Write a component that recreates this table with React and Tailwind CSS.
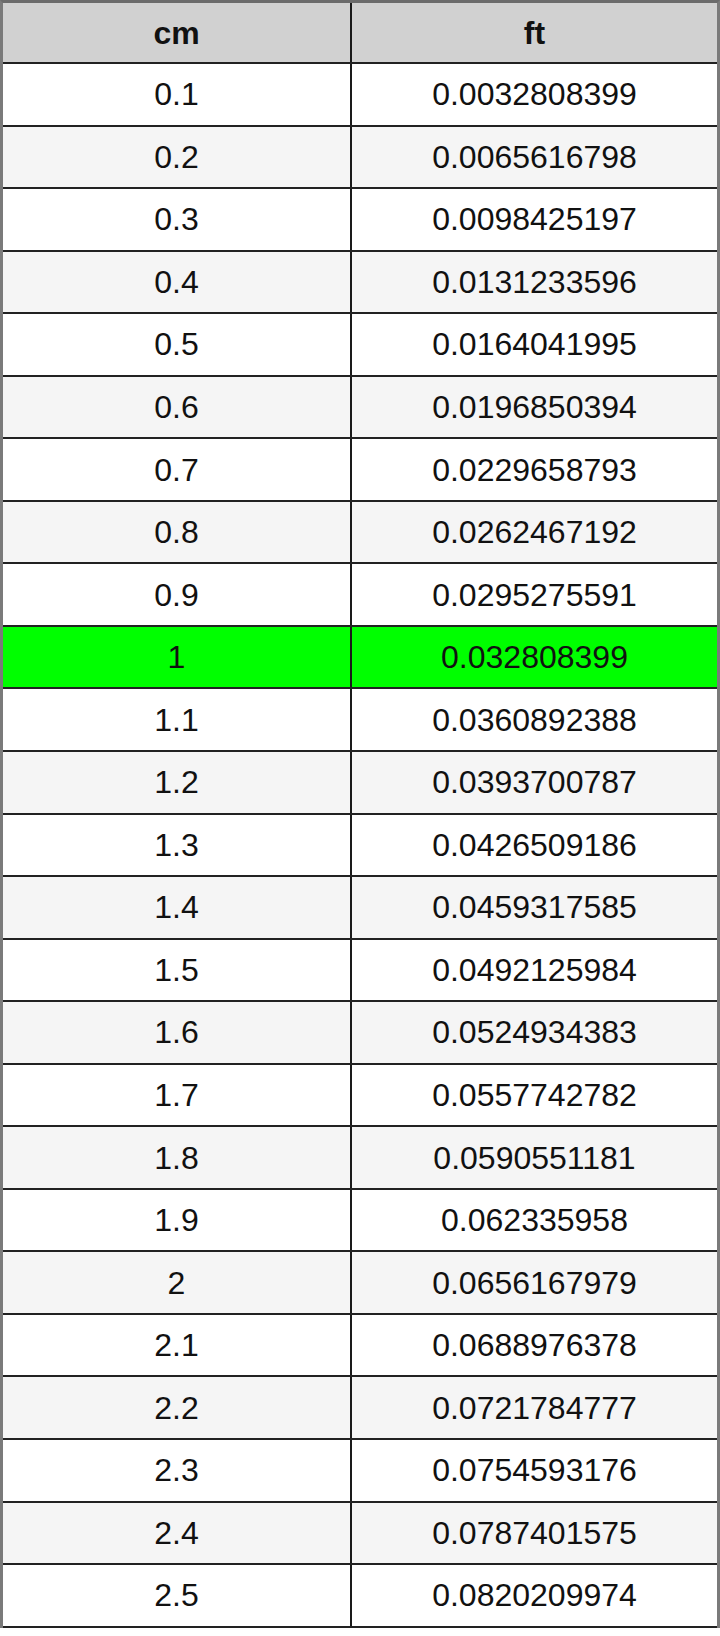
const rows = [
  ["0.1", "0.0032808399"],
  ["0.2", "0.0065616798"],
  ["0.3", "0.0098425197"],
  ["0.4", "0.0131233596"],
  ["0.5", "0.0164041995"],
  ["0.6", "0.0196850394"],
  ["0.7", "0.0229658793"],
  ["0.8", "0.0262467192"],
  ["0.9", "0.0295275591"],
  ["1", "0.032808399"],
  ["1.1", "0.0360892388"],
  ["1.2", "0.0393700787"],
  ["1.3", "0.0426509186"],
  ["1.4", "0.0459317585"],
  ["1.5", "0.0492125984"],
  ["1.6", "0.0524934383"],
  ["1.7", "0.0557742782"],
  ["1.8", "0.0590551181"],
  ["1.9", "0.062335958"],
  ["2", "0.0656167979"],
  ["2.1", "0.0688976378"],
  ["2.2", "0.0721784777"],
  ["2.3", "0.0754593176"],
  ["2.4", "0.0787401575"],
  ["2.5", "0.0820209974"],
];

export default function App() {
  return (
    <div
      className="w-[720px] h-[1636px] bg-white text-[#111]"
      style={{ fontFamily: '"Liberation Sans", Arial, sans-serif' }}
    >
      <div className="border-t-[3px] border-l-[3px] border-r-[3px] border-t-[#6b6b6b] border-l-[#7a7a7a] border-r-[#7a7a7a]">
        <div className="grid grid-cols-[349px_1fr] h-[61px] bg-[#d1d1d1] border-b-2 border-b-[#222] text-[32px] font-bold">
          <div className="flex items-center justify-center border-r-2 border-r-[#1a1a1a]">cm</div>
          <div className="flex items-center justify-center">ft</div>
        </div>
        {rows.map(([a, b], i) => {
          const green = a === "1";
          const bg = green ? "bg-[#00ff00]" : i % 2 === 1 ? "bg-[#f5f5f5]" : "bg-white";
          return (
            <div
              key={a}
              className={`grid grid-cols-[349px_1fr] h-[62.55px] border-b-2 border-b-[#222] text-[32px] ${bg}`}
            >
              <div className="flex items-center justify-center border-r-2 border-r-[#1a1a1a]">{a}</div>
              <div className="flex items-center justify-center">{b}</div>
            </div>
          );
        })}
      </div>
    </div>
  );
}
